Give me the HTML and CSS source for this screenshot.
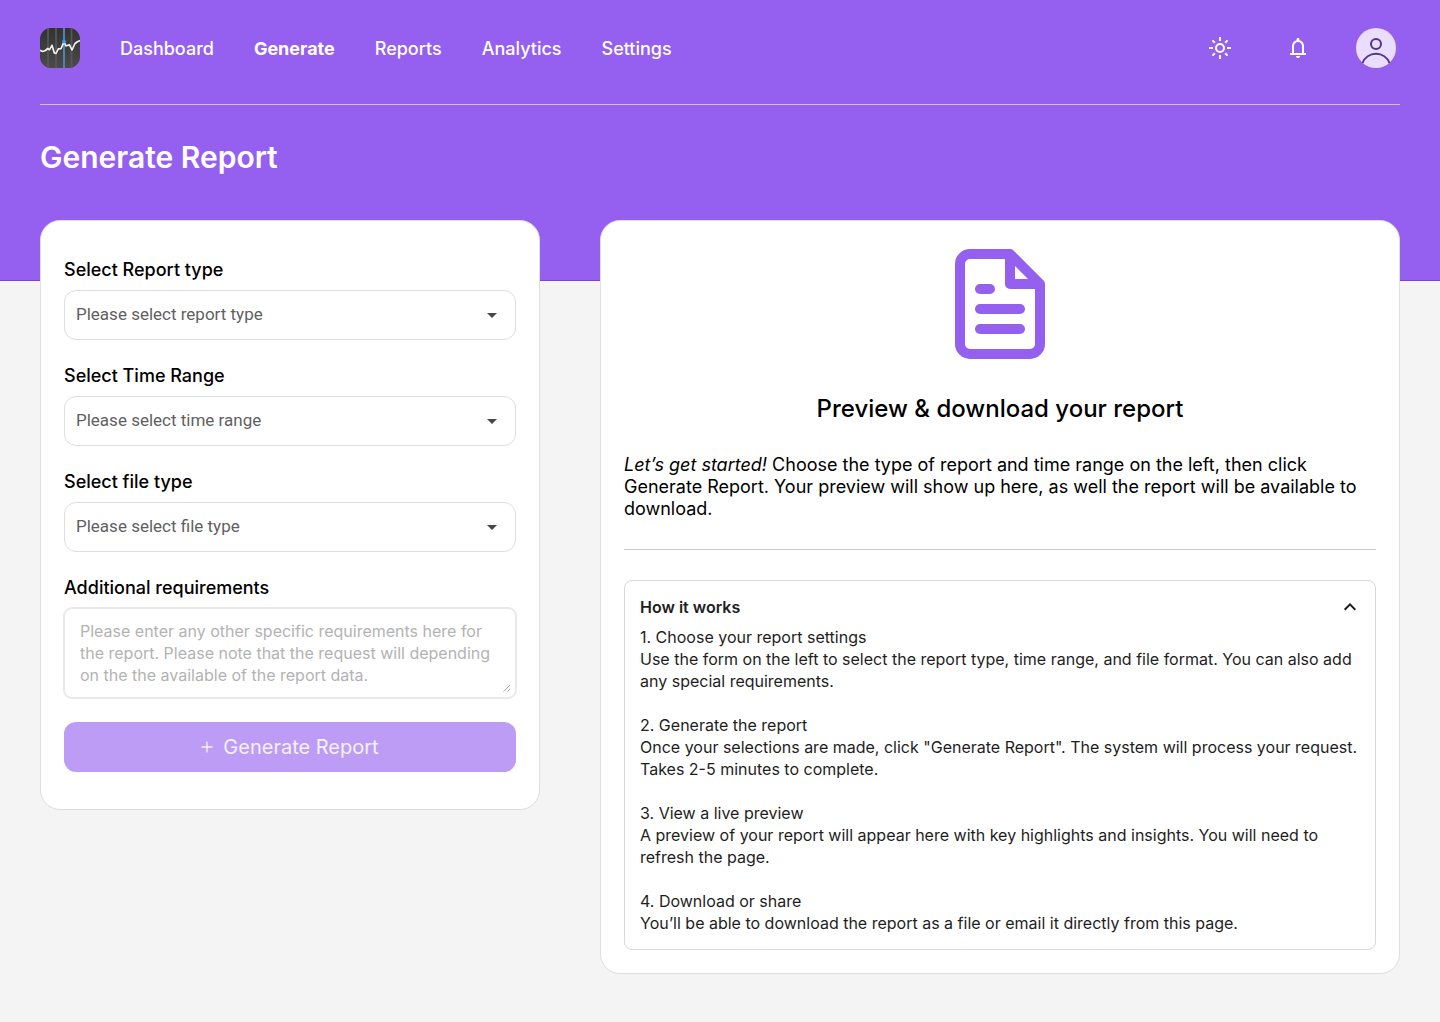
FILE: index.html
```html
<!DOCTYPE html>
<html lang="en">
<head>
<meta charset="utf-8">
<meta name="viewport" content="width=device-width, initial-scale=1">
<title>Generate Report</title>
<link rel="stylesheet" href="styles.css">
</head>
<body>
<header class="header">
  <div class="topbar">
    <a class="logo" href="#" aria-label="Home">
      <svg width="40" height="40" viewBox="0 0 40 40">
        <defs>
          <linearGradient id="tile" x1="0" y1="0" x2="0" y2="1"><stop offset="0" stop-color="#323232"/><stop offset="1" stop-color="#4a4a4a"/></linearGradient>
          <clipPath id="tile-clip"><rect width="40" height="40" rx="11"/></clipPath>
        </defs>
        <g clip-path="url(#tile-clip)">
          <rect width="40" height="40" fill="url(#tile)"/>
          <path d="M8 0V40M16 0V40M31.500 0V40" stroke="#565656" stroke-width="1.800"/>
          <path d="M24 0V40" stroke="#4f83ab" stroke-width="2"/>
          <path d="M0 22.300L2.700 23.500L5.500 22.500L7.700 20.500L9.500 21.700L12 17.300L14.300 25L16 25.500L18.300 20.800L21 20.600L24 13.800L26 18L29.500 16.800L32 22L35 15.500L37 14L40 12.500" fill="none" stroke="#f1f1ec" stroke-width="1.700" stroke-linejoin="round"/>
          <circle cx="24" cy="13.500" r="1.900" fill="#3b97e6"/>
        </g>
      </svg>
    </a>
    <nav class="nav" aria-label="Main">
      <a href="#">Dashboard</a>
      <a href="#" class="active" aria-current="page">Generate</a>
      <a href="#">Reports</a>
      <a href="#">Analytics</a>
      <a href="#">Settings</a>
    </nav>
    <div class="actions">
      <button class="icon-button" type="button" aria-label="Toggle theme">
        <svg width="24" height="24" viewBox="0 0 24 24" fill="none" stroke="#fff" stroke-width="2"><circle cx="12" cy="12" r="4"/><path d="M12 1V5M12 19V23M1 12H5M19 12H23M4.400 4.400L6.800 6.800M17.200 17.200L19.600 19.600M19.600 4.400L17.200 6.800M6.800 17.200L4.400 19.600"/></svg>
      </button>
      <button class="icon-button" type="button" aria-label="Notifications">
        <svg width="24" height="24" viewBox="0 0 24 24" fill="#fff"><path fill-rule="evenodd" d="M4 19V17H6V10C6 8.600 6.420 7.370 7.250 6.280C8.080 5.180 9.170 4.470 10.500 4.130V3.500C10.500 3.080 10.650 2.730 10.940 2.440C11.230 2.150 11.580 2 12 2C12.420 2 12.770 2.150 13.060 2.440C13.350 2.730 13.500 3.080 13.500 3.500V4.130C14.830 4.470 15.920 5.180 16.750 6.280C17.580 7.370 18 8.600 18 10V17H20V19ZM12 22C11.450 22 10.980 21.800 10.590 21.410C10.200 21.020 10 20.550 10 20H14C14 20.550 13.800 21.020 13.410 21.410C13.020 21.800 12.550 22 12 22ZM8 17H16V10C16 8.900 15.610 7.960 14.830 7.180C14.040 6.390 13.100 6 12 6C10.900 6 9.960 6.390 9.180 7.180C8.390 7.960 8 8.900 8 10Z"/></svg>
      </button>
      <button class="icon-button avatar" type="button" aria-label="Account">
        <svg width="40" height="40" viewBox="0 0 40 40"><circle cx="20" cy="20" r="20" fill="#eaddff"/><g fill="none" stroke="#4f378a" stroke-width="2"><circle cx="20" cy="16" r="5"/><path d="M6.500 35A14.500 14.500 0 0 1 33.500 35"/></g></svg>
      </button>
    </div>
  </div>
  <h1 class="page-title">Generate Report</h1>
</header>

<main class="content">
  <form class="card form">
    <div class="field">
      <label for="report-type">Select Report type</label>
      <div class="select">
        <select id="report-type"><option>Please select report type</option></select>
        <svg class="caret" width="24" height="24" viewBox="0 0 24 24"><path d="M7 10L12 15L17 10Z" fill="#49454f"/></svg>
      </div>
    </div>
    <div class="field">
      <label for="time-range">Select Time Range</label>
      <div class="select">
        <select id="time-range"><option>Please select time range</option></select>
        <svg class="caret" width="24" height="24" viewBox="0 0 24 24"><path d="M7 10L12 15L17 10Z" fill="#49454f"/></svg>
      </div>
    </div>
    <div class="field">
      <label for="file-type">Select file type</label>
      <div class="select">
        <select id="file-type"><option>Please select file type</option></select>
        <svg class="caret" width="24" height="24" viewBox="0 0 24 24"><path d="M7 10L12 15L17 10Z" fill="#49454f"/></svg>
      </div>
    </div>
    <div class="field">
      <label for="requirements">Additional requirements</label>
      <div class="textarea">
        <textarea id="requirements" rows="3" placeholder="Please enter any other specific requirements here for the report. Please note that the request will depending on the the available of the report data."></textarea>
        <svg class="grip" width="8" height="8" viewBox="0 0 8 8"><path d="M0.500 7.500L7 1M4.500 7.500L7.300 4.700" stroke="#a6a6a6"/></svg>
      </div>
    </div>
    <button class="submit" type="submit" disabled>
      <svg width="12" height="12" viewBox="0 0 12 12"><path d="M6 0.500V11.500M0.500 6H11.500" stroke="currentColor" stroke-width="1.300"/></svg>
      Generate Report
    </button>
  </form>

  <section class="card preview">
    <svg class="document" width="120" height="120" viewBox="0 0 120 120" fill="none" stroke="#9560f0" stroke-width="10" stroke-linecap="round" stroke-linejoin="round"><path stroke-linecap="butt" d="M70 10H30A10 10 0 0 0 20 20V100A10 10 0 0 0 30 110H90A10 10 0 0 0 100 100V40"/><path d="M70 10V40H100Z"/><path d="M40 45H50M40 65H80M40 85H80"/></svg>
    <h2>Preview &amp; download your report</h2>
    <p class="intro"><em>Let’s get started!</em> Choose the type of report and time range on the left, then click Generate Report. Your preview will show up here, as well the report will be available to download.</p>
    <hr>
    <details class="help" open>
      <summary>How it works
        <svg width="20" height="24" viewBox="2 0 20 24"><path d="M6.700 14.700L12 9.400L17.300 14.700" fill="none" stroke="#1d1b20" stroke-width="2"/></svg>
      </summary>
      <div class="steps">
        <div><h3>1. Choose your report settings</h3><p>Use the form on the left to select the report type, time range, and file format. You can also add any special requirements.</p></div>
        <div><h3>2. Generate the report</h3><p>Once your selections are made, click "Generate Report". The system will process your request. Takes 2-5 minutes to complete.</p></div>
        <div><h3>3. View a live preview</h3><p>A preview of your report will appear here with key highlights and insights. You will need to refresh the page.</p></div>
        <div><h3>4. Download or share</h3><p>You’ll be able to download the report as a file or email it directly from this page.</p></div>
      </div>
    </details>
  </section>
</main>
</body>
</html>
```
FILE: styles.css
```css
* {
  box-sizing: border-box;
}

body {
  margin: 0;
  background: #f4f4f4;
  color: #000;
  font-family: Inter, "Liberation Sans", sans-serif;
  font-size: 16px;
  line-height: 22px;
}

h1, h2, h3, p {
  margin: 0;
}

svg {
  display: block;
  flex: none;
}

.header {
  padding: 0 40px 105px;
  background: #9560f0;
  border-bottom: 1px solid #7f3fe6;
  color: #fff;
}

.topbar {
  display: flex;
  align-items: center;
  gap: 40px;
  padding: 28px 4px 36px 0;
  border-bottom: 1px solid #d5bffa;
}

.nav {
  display: flex;
  gap: 40px;
  padding-top: 2px;
  font-size: 18px;
  font-weight: 500;
}

.nav a {
  color: #fff;
  text-decoration: none;
}

.nav .active {
  font-weight: 700;
}

.actions {
  display: flex;
  align-items: center;
  gap: 54px;
  margin-left: auto;
}

.icon-button {
  padding: 0;
  border: 0;
  background: none;
  cursor: pointer;
}

.avatar {
  margin-left: -8px;
}

.page-title {
  padding-top: 34px;
  font-size: 30px;
  font-weight: 600;
  line-height: 36px;
}

.content {
  display: grid;
  grid-template-columns: 5fr 8fr;
  align-items: start;
  gap: 60px;
  margin-top: -61px;
  padding: 0 40px 48px;
}

.card {
  min-width: 0;
  padding: 23px;
  background: #fff;
  border: 1px solid #dedede;
  border-radius: 20px;
}

.form {
  display: flex;
  flex-direction: column;
  gap: 24px;
  padding: 37px 23px;
}

.field {
  display: flex;
  flex-direction: column;
  gap: 8px;
}

.field label {
  font-size: 18px;
  font-weight: 500;
  line-height: 24px;
}

.select,
.textarea {
  position: relative;
}

.select select {
  display: block;
  width: 100%;
  height: 50px;
  padding: 0 40px 2px 11px;
  appearance: none;
  background: #fff;
  border: 1px solid #dedede;
  border-radius: 12px;
  color: #5f5f63;
  font-family: Roboto, sans-serif;
  font-size: 17px;
}

.caret {
  position: absolute;
  top: 13px;
  right: 12px;
  pointer-events: none;
}

textarea {
  display: block;
  width: 100%;
  height: 90px;
  padding: 11px 15px;
  resize: vertical;
  background: #fff;
  border: 1px solid #e9e9e9;
  border-radius: 8px;
  box-shadow: 0 0 0 1px #e9e9e9;
  font: 400 16px/22px Inter, sans-serif;
}

textarea::placeholder {
  color: #b3b3b3;
}

textarea::-webkit-resizer {
  background: transparent;
}

.grip {
  position: absolute;
  right: 5px;
  bottom: 6px;
  pointer-events: none;
}

.submit {
  display: flex;
  align-items: center;
  justify-content: center;
  gap: 10px;
  height: 50px;
  padding: 0;
  background: #bd9cf5;
  border: 0;
  border-radius: 12px;
  color: #f5f0fc;
  font: 400 20px/24px Inter, sans-serif;
}

.document {
  margin: 0 auto 30px;
}

.preview h2 {
  margin-bottom: 30px;
  font-size: 24px;
  font-weight: 500;
  line-height: 30px;
  text-align: center;
}

.intro {
  font-size: 18px;
}

.preview hr {
  margin: 29px 0 30px;
  border: 0;
  border-top: 1px solid #c8c8c8;
}

.help {
  padding: 15px;
  border: 1px solid #d9d9d9;
  border-radius: 8px;
  color: #1e1e1e;
}

.help summary {
  display: flex;
  align-items: center;
  justify-content: space-between;
  height: 22px;
  font-weight: 600;
  list-style: none;
  cursor: pointer;
}

.steps {
  display: flex;
  flex-direction: column;
  gap: 22px;
  margin-top: 8px;
}

.steps h3 {
  font-size: 16px;
  font-weight: 400;
}
```
